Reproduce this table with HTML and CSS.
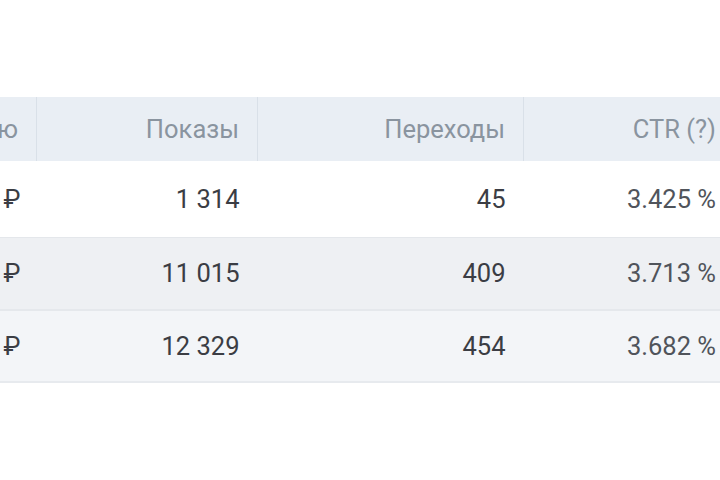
FILE: index.html
```html
<!DOCTYPE html>
<html lang="ru">
<head>
<meta charset="utf-8">
<link rel="stylesheet" href="styles.css">
</head>
<body>
<div class="viewport">
  <table class="stats">
    <thead>
      <tr>
        <th class="c-cost">Расход за неделю</th>
        <th class="c-shows">Показы</th>
        <th class="c-clicks">Переходы</th>
        <th class="c-ctr">CTR (?)</th>
      </tr>
    </thead>
    <tbody>
      <tr class="r1">
        <td>1 254 ₽</td>
        <td>1 314</td>
        <td>45</td>
        <td>3.425 %</td>
      </tr>
      <tr class="r2">
        <td>9 870 ₽</td>
        <td>11 015</td>
        <td>409</td>
        <td>3.713 %</td>
      </tr>
      <tr class="r3">
        <td>11 124 ₽</td>
        <td>12 329</td>
        <td>454</td>
        <td>3.682 %</td>
      </tr>
    </tbody>
  </table>
</div>
</body>
</html>
```

FILE: styles.css
```css
html, body {
  margin: 0;
  padding: 0;
  background: #ffffff;
}

.viewport {
  width: 720px;
  height: 480px;
  overflow: hidden;
  padding-top: 97px;
  box-sizing: border-box;
}

.stats {
  border-collapse: collapse;
  table-layout: fixed;
  width: 973px;
  margin-left: -242px;
  font-family: Roboto, "Liberation Sans", sans-serif;
  font-size: 25.5px;
}

.stats th,
.stats td {
  text-align: right;
  padding: 0 18px 0 0;
  white-space: nowrap;
  overflow: hidden;
}

.c-cost { width: 260px; }
.c-shows { width: 202px; }
.c-clicks { width: 247px; }
.c-ctr { width: 192px; }

.stats thead tr {
  background: #e9eef4;
  height: 64px;
}

.stats th {
  font-weight: 400;
  color: #8a949f;
  border-left: 1px solid #d9e0e8;
}

.stats th:first-child {
  border-left: none;
}

.stats td {
  color: #3b3d44;
}

.stats td:first-child {
  padding-right: 16px;
}

.stats td:last-child {
  color: #50545b;
}

.r1 {
  background: #ffffff;
  height: 76px;
  border-bottom: 1px solid #e4e7eb;
}

.r2 {
  background: #eef0f3;
  height: 73px;
  border-bottom: 2px solid #e5e8ec;
}

.r3 {
  background: #f3f5f8;
  height: 72px;
  border-bottom: 2px solid #e7eaee;
}
```
